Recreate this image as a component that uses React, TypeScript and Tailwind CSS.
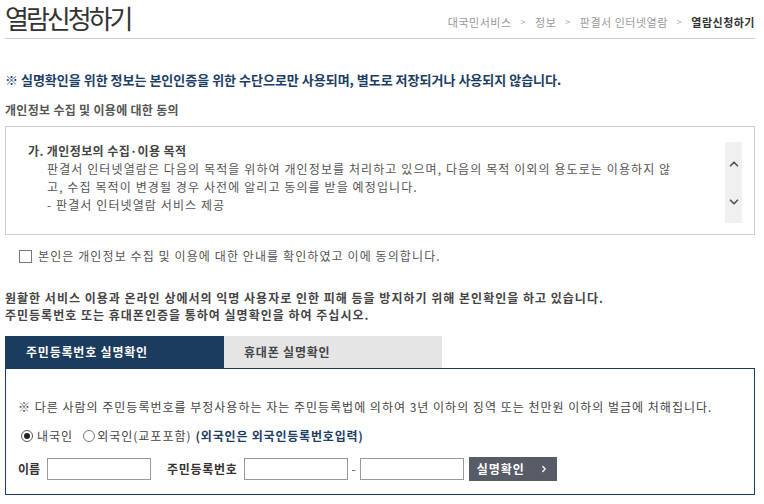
import { ChevronUp, ChevronDown, ChevronRight } from "lucide-react";

const font = { fontFamily: '"Noto Sans CJK KR", "Noto Sans", sans-serif' };

function Breadcrumb() {
  const items = ["대국민서비스", "정보", "판결서 인터넷열람"];
  return (
    <div className="flex items-center text-[11px] text-[#999] mt-[6px] tracking-[0.5px]">
      {items.map((it) => (
        <span key={it} className="flex items-center">
          <span>{it}</span>
          <span className="mx-[9px] text-[9px] text-[#aaa]">&gt;</span>
        </span>
      ))}
      <span className="font-bold text-[#333]">열람신청하기</span>
    </div>
  );
}

export default function App() {
  return (
    <div className="w-[764px] h-[504px] bg-white overflow-hidden text-[#333]" style={font}>
      <div className="ml-[5px] w-[750px]">
        {/* header */}
        <div className="flex items-center justify-between h-[39px] border-b border-[#ccc]">
          <h1 className="text-[26px] leading-none text-[#333] tracking-[-3px] -mt-[2px]">열람신청하기</h1>
          <Breadcrumb />
        </div>

        <p className="mt-[32px] text-[13px] font-bold text-[#1c3d64] leading-[18px]">
          ※ 실명확인을 위한 정보는 본인인증을 위한 수단으로만 사용되며, 별도로 저장되거나 사용되지 않습니다.
        </p>
        <p className="mt-[13px] text-[12px] font-bold text-[#555] leading-[16px] tracking-[0.3px]">개인정보 수집 및 이용에 대한 동의</p>

        {/* agreement box */}
        <div className="mt-[8px] h-[109px] border border-[#ccc] flex items-start">
          <div className="flex-1 pl-[22px] pt-[15px] text-[12px] leading-[18px] text-[#555] tracking-[1.1px]">
            <p className="font-bold text-[#444] tracking-[0.4px]">가. 개인정보의 수집·이용 목적</p>
            <div className="pl-[19px]">
              <p>판결서 인터넷열람은 다음의 목적을 위하여 개인정보를 처리하고 있으며, 다음의 목적 이외의 용도로는 이용하지 않</p>
              <p>고, 수집 목적이 변경될 경우 사전에 알리고 동의를 받을 예정입니다.</p>
              <p>- 판결서 인터넷열람 서비스 제공</p>
            </div>
          </div>
          <div className="mt-[15px] mr-[12px] w-[17px] h-[81px] bg-[#f0f0f0] flex flex-col items-center justify-center gap-[24px] text-[#555]">
            <ChevronUp size={14} strokeWidth={3} />
            <ChevronDown size={14} strokeWidth={3} />
          </div>
        </div>

        {/* checkbox */}
        <label className="mt-[12px] ml-[14px] flex items-center gap-[6px] text-[12px] text-[#555] tracking-[1.1px]">
          <span className="w-[13px] h-[13px] border border-[#777] bg-white" />
          <span>본인은 개인정보 수집 및 이용에 대한 안내를 확인하였고 이에 동의합니다.</span>
        </label>

        <div className="mt-[24px] text-[12px] font-bold text-[#444] leading-[17px] tracking-[1px]">
          <p>원활한 서비스 이용과 온라인 상에서의 익명 사용자로 인한 피해 등을 방지하기 위해 본인확인을 하고 있습니다.</p>
          <p>주민등록번호 또는 휴대폰인증을 통하여 실명확인을 하여 주십시오.</p>
        </div>

        {/* tabs */}
        <div className="mt-[13px] flex tracking-[0.8px]">
          <div className="w-[219px] h-[32px] bg-[#1b3b5f] text-white text-[12px] font-bold flex items-center pl-[21px]">
            주민등록번호 실명확인
          </div>
          <div className="w-[218px] h-[32px] bg-[#e5e5e5] text-[#444] text-[12px] font-bold flex items-center pl-[20px]">
            휴대폰 실명확인
          </div>
        </div>

        <div className="h-[127px] border border-[#1b3b5f] px-[12px] pt-[29px] text-[12px] text-[#444]">
          <p className="leading-[18px] tracking-[1px]">
            ※ 다른 사람의 주민등록번호를 부정사용하는 자는 주민등록법에 의하여 3년 이하의 징역 또는 천만원 이하의 벌금에 처해집니다.
          </p>
          <div className="mt-[11px] flex items-center text-[12px] leading-[18px] tracking-[1px]">
            <span className="ml-[3px] w-[12px] h-[12px] rounded-full border border-[#555] flex items-center justify-center">
              <span className="w-[6px] h-[6px] rounded-full bg-[#222]" />
            </span>
            <span className="ml-[4px]">내국인</span>
            <span className="ml-[10px] w-[12px] h-[12px] rounded-full border border-[#777]" />
            <span className="ml-[2px]">외국인(교포포함)</span>
            <span className="ml-[4px] font-bold text-[#1c3d64] tracking-[0.8px]">(외국인은 외국인등록번호입력)</span>
          </div>
          <div className="mt-[12px] flex items-center">
            <span className="font-bold text-[#333]">이름</span>
            <span className="ml-[7px] w-[104px] h-[22px] border border-[#999] bg-white" />
            <span className="ml-[16px] font-bold text-[#333] tracking-[0.7px]">주민등록번호</span>
            <span className="ml-[6px] w-[104px] h-[22px] border border-[#999] bg-white" />
            <span className="mx-[4px] text-[#555]">-</span>
            <span className="w-[104px] h-[22px] border border-[#999] bg-white" />
            <button className="ml-[5px] w-[88px] h-[24px] bg-[#575c66] text-white text-[12px] font-bold flex items-center justify-center gap-[14px] tracking-[1px]">
              <span>실명확인</span>
              <ChevronRight size={10} strokeWidth={3} />
            </button>
          </div>
        </div>
      </div>
    </div>
  );
}
